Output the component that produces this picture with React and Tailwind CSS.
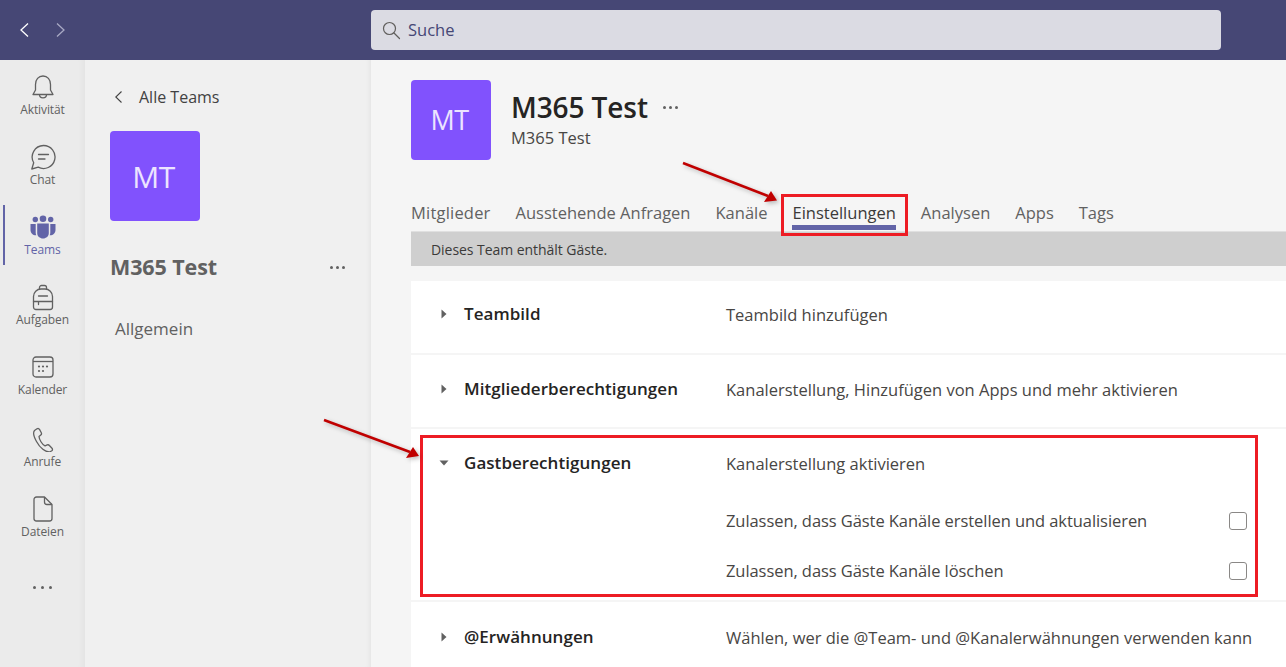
const font = { fontFamily: '"Open Sans", "Noto Sans", sans-serif' };

function Bell() {
  return (
    <svg width="24" height="26" viewBox="0 0 24 26" fill="none" stroke="#616161" strokeWidth="1.3" strokeLinejoin="round">
      <path d="M4.500 10.500C4.500 5.500 7.500 2 12 2s7.500 3.500 7.500 8.500v5.500l2.500 4.500H2L4.500 16z" />
      <path d="M8.500 20.500c0 2 1.500 3.300 3.500 3.300s3.500-1.300 3.500-3.300" />
    </svg>
  );
}

function ChatIcon() {
  return (
    <svg width="26" height="26" viewBox="0 0 26 26" fill="none" stroke="#616161" strokeWidth="1.3" strokeLinecap="round" strokeLinejoin="round">
      <path d="M13.500 1.500a11.500 11.500 0 1 1-5.300 21.700L1.800 25l1.900-6.300A11.500 11.500 0 0 1 13.500 1.500z" />
      <path d="M8.500 10.500h10M8.500 15h6.500" />
    </svg>
  );
}

function TeamsIcon() {
  return (
    <svg width="26" height="24" viewBox="0 0 26 24" fill="#6264a7">
      <circle cx="13" cy="3.800" r="3.300" />
      <circle cx="5.300" cy="4.500" r="2.700" />
      <circle cx="20.700" cy="4.500" r="2.700" />
      <path d="M0.500 9h5.200v8.500c0 1 .2 2 .6 2.800C3 20.500 0.500 18 0.500 15z" />
      <path d="M25.500 9h-5.200v8.500c0 1-.2 2-.6 2.800 3.300.2 5.800-2.300 5.800-5.300z" />
      <path d="M7.200 8.500h11.600v9.500c0 3.200-2.600 5.500-5.800 5.500s-5.800-2.300-5.800-5.500z" />
    </svg>
  );
}

function Backpack() {
  return (
    <svg width="22" height="27" viewBox="0 0 22 27" fill="none" stroke="#616161" strokeWidth="1.3" strokeLinecap="round" strokeLinejoin="round">
      <path d="M7.500 5V3.500A2 2 0 0 1 9.500 1.500h3a2 2 0 0 1 2 2V5" />
      <path d="M1.500 12.500A7.500 7.500 0 0 1 9 5h4a7.500 7.500 0 0 1 7.500 7.500V23a2.500 2.500 0 0 1-2.500 2.500H4A2.500 2.500 0 0 1 1.500 23z" />
      <path d="M1.500 17.500h19M6.500 12h9M6.500 17.500v3" />
    </svg>
  );
}

function CalendarIcon() {
  return (
    <svg width="22" height="22" viewBox="0 0 22 22" fill="none">
      <rect x="1" y="1" width="20" height="20" rx="3" stroke="#616161" strokeWidth="1.300" />
      <path d="M1 5.500h20" stroke="#616161" strokeWidth="1.300" />
      <g fill="#616161">
        <circle cx="7" cy="10.500" r="1.100" />
        <circle cx="11" cy="10.500" r="1.100" />
        <circle cx="15" cy="10.500" r="1.100" />
        <circle cx="7" cy="15" r="1.100" />
        <circle cx="11" cy="15" r="1.100" />
      </g>
    </svg>
  );
}

function Phone() {
  return (
    <svg width="22" height="25" viewBox="0 0 22 25" fill="none" stroke="#616161" strokeWidth="1.300" strokeLinejoin="round">
      <path d="M2.500 3.500 5 1.800c1-.6 2-.3 2.500.6l1.800 3.300c.4.800.2 1.700-.5 2.300L7 9.500c.2 2.800 3 8 6 9.300l2.200-.9c.8-.3 1.700 0 2.200.6l2.600 2.800c.7.800.6 1.900-.2 2.500l-1.800 1C13.500 25.500 8 21 4.500 14.500 2 10 .8 5.500 2.500 3.500z" />
    </svg>
  );
}

function FileIcon() {
  return (
    <svg width="20" height="26" viewBox="0 0 20 26" fill="none" stroke="#616161" strokeWidth="1.300" strokeLinejoin="round">
      <path d="M3.500 1h8L19 8.500v14A2.500 2.500 0 0 1 16.500 25h-13A2.500 2.500 0 0 1 1 22.500v-19A2.500 2.500 0 0 1 3.500 1z" />
      <path d="M11.500 1v5a2.500 2.500 0 0 0 2.500 2.500h5" />
    </svg>
  );
}

const navItems = [
  { label: "Aktivität", icon: <Bell />, height: "h-[70px]" },
  { label: "Chat", icon: <ChatIcon />, height: "h-[70px]" },
  { label: "Teams", icon: <TeamsIcon />, height: "h-[70px]", active: true },
  { label: "Aufgaben", icon: <Backpack />, height: "h-[70px]" },
  { label: "Kalender", icon: <CalendarIcon />, height: "h-[72px]" },
  { label: "Anrufe", icon: <Phone />, height: "h-[70px]" },
  { label: "Dateien", icon: <FileIcon />, height: "h-[70px]" },
];

function NavRail() {
  return (
    <nav className="w-[85px] shrink-0 bg-[#ebebeb] pt-[12px] flex flex-col items-center shadow-[inset_-8px_0_8px_-8px_rgba(0,0,0,0.06)]">
      {navItems.map((item) => (
        <div key={item.label} className={`relative w-full flex flex-col items-center ${item.height}`}>
          {item.active && <span className="absolute left-[3px] top-[-7px] w-[2px] h-[60px] bg-[#6264a7]" />}
          <div className="h-[30px] w-full flex items-center justify-center">{item.icon}</div>
          <span className={`text-[12px] leading-[16px] tracking-[-0.1px] ${item.active ? "text-[#6264a7]" : "text-[#616161]"}`}>
            {item.label}
          </span>
        </div>
      ))}
      <div className="mt-[22px] flex gap-[5px]">
        <span className="w-[3px] h-[3px] rounded-full bg-[#616161]" />
        <span className="w-[3px] h-[3px] rounded-full bg-[#616161]" />
        <span className="w-[3px] h-[3px] rounded-full bg-[#616161]" />
      </div>
    </nav>
  );
}

function Dots({ color = "#616161" }) {
  return (
    <span className="flex gap-[3px]">
      <span className="w-[3px] h-[3px] rounded-full" style={{ background: color }} />
      <span className="w-[3px] h-[3px] rounded-full" style={{ background: color }} />
      <span className="w-[3px] h-[3px] rounded-full" style={{ background: color }} />
    </span>
  );
}

function TeamPanel() {
  return (
    <aside className="w-[286px] shrink-0 bg-[#f0f0f0] pt-[26px] shadow-[inset_-6px_0_6px_-6px_rgba(0,0,0,0.08)]">
      <div className="flex items-center pl-[29px] h-[22px]">
        <svg width="9" height="14" viewBox="0 0 9 14" fill="none" stroke="#424242" strokeWidth="1.100">
          <path d="M7.500 1.500 1.800 7l5.700 5.500" />
        </svg>
        <span className="ml-[16px] text-[16px] text-[#424242]">Alle Teams</span>
      </div>
      <div className="ml-[25px] mt-[23px] w-[90px] h-[90px] rounded-[4px] bg-[#8152fd] flex items-center justify-center pr-[3px] text-[30px] text-[#ece4ff] tracking-[-0.5px]">
        MT
      </div>
      <div className="mt-[31px] pl-[25px] pr-[26px] flex items-center justify-between">
        <span className="text-[21.500px] font-bold tracking-[-0.1px] text-[#616161] leading-[30px]">M365 Test</span>
        <Dots />
      </div>
      <div className="mt-[36px] pl-[30px] text-[17px] text-[#616161] leading-[22px]">Allgemein</div>
    </aside>
  );
}

const tabs = ["Mitglieder", "Ausstehende Anfragen", "Kanäle", "Einstellungen", "Analysen", "Apps", "Tags"];

function Tabs() {
  return (
    <div className="flex gap-[25px] h-[35px] mt-[37px] border-b border-[#e0e0e0]">
      {tabs.map((tab) => (
        <div key={tab} className={`relative text-[16.500px] leading-[32px] text-[#616161] ${tab === "Mitglieder" ? "tracking-[0.2px]" : ""}`}>
          <span className={tab === "Einstellungen" ? "text-[#3b3a39]" : ""}>{tab}</span>
          {tab === "Einstellungen" && <span className="absolute left-0 right-0 bottom-[1px] h-[5px] bg-[#6264a7]" />}
        </div>
      ))}
    </div>
  );
}

function Caret({ open }) {
  return (
    <svg width="10" height="10" viewBox="0 0 10 10" fill="#616161" className="shrink-0">
      {open ? <path d="M.5 2.500h9L5 7.500z" /> : <path d="M2.500 .5v9l5-4.500z" />}
    </svg>
  );
}

function Row({ title, text, open, className, children }) {
  return (
    <section className={`bg-white ${className}`}>
      <div className="flex items-center pl-[28px]">
        <Caret open={open} />
        <h3 className="w-[262px] ml-[15px] text-[17px] font-semibold tracking-[0.05px] text-[#252423] leading-[22px]">{title}</h3>
        <p className="text-[16.500px] text-[#484644] leading-[22px] mt-[2px] whitespace-nowrap">{text}</p>
      </div>
      {children}
    </section>
  );
}

function Option({ label, className }) {
  return (
    <div className={`flex items-center pl-[315px] pr-[39px] justify-between ${className}`}>
      <span className="text-[16.500px] tracking-[-0.07px] text-[#484644] leading-[22px]">{label}</span>
      <span className="w-[18px] h-[18px] rounded-[3px] border-[1.5px] border-[#8a8886] bg-white" />
    </div>
  );
}

function Annotations() {
  return (
    <>
      <div className="absolute left-[781px] top-[194px] w-[127px] h-[42px] border-[3px] border-[#ed1c24]" />
      <div className="absolute left-[420px] top-[435px] w-[838px] h-[162px] border-[3px] border-[#ed1c24]" />
      <svg className="absolute left-0 top-0 pointer-events-none drop-shadow-[2px_2px_2px_rgba(0,0,0,0.25)]" width="1286" height="667" viewBox="0 0 1286 667" fill="#c00000">
        <path d="M683 163 768 196" stroke="#c00000" strokeWidth="2.500" />
        <path d="M777 200.500 771 191 764 202z" />
        <path d="M324 420 410 452" stroke="#c00000" strokeWidth="2.500" />
        <path d="M419 456 413 447 406 458z" />
      </svg>
    </>
  );
}

export default function App() {
  return (
    <div className="relative w-[1286px] h-[667px] overflow-hidden flex flex-col" style={font}>
      <header className="h-[60px] shrink-0 bg-[#464775] flex items-center relative">
        <svg className="ml-[19px]" width="11" height="16" viewBox="0 0 11 16" fill="none" stroke="#ffffff" strokeWidth="1.300">
          <path d="M9 1.500 2 8l7 6.500" />
        </svg>
        <svg className="ml-[25px]" width="11" height="16" viewBox="0 0 11 16" fill="none" stroke="#a8a9c4" strokeWidth="1.300">
          <path d="M2 1.500 9 8l-7 6.500" />
        </svg>
        <div className="ml-[305px] w-[850px] h-[40px] rounded-[4px] bg-[#dbdbe3] flex items-center pl-[11px]">
          <svg width="19" height="19" viewBox="0 0 19 19" fill="none" stroke="#605e5c" strokeWidth="1.200" strokeLinecap="round">
            <circle cx="7.500" cy="7.500" r="6" />
            <path d="M12 12l5.500 5.500" />
          </svg>
          <span className="ml-[7px] text-[16.500px] text-[#464775]">Suche</span>
        </div>
      </header>
      <div className="flex flex-1 min-h-0">
        <NavRail />
        <TeamPanel />
        <main className="flex-1 min-w-0 bg-[#f5f5f5] pl-[40px] pt-[20px]">
          <div className="flex items-start">
            <div className="w-[80px] h-[80px] rounded-[4px] bg-[#8152fd] flex items-center justify-center pr-[3px] text-[27px] text-[#ece4ff] tracking-[-0.5px]">
              MT
            </div>
            <div className="ml-[20px] pt-[9px]">
              <div className="flex items-center gap-[15px]">
                <span className="text-[28px] font-semibold tracking-[-0.1px] text-[#252423] leading-[36px]">M365 Test</span>
                <Dots />
              </div>
              <div className="text-[16.500px] text-[#484644] leading-[22px] mt-[2px]">M365 Test</div>
            </div>
          </div>
          <Tabs />
          <div className="h-[34px] bg-[#cfcfcf] pl-[20px] flex items-center text-[14px] tracking-[-0.05px] text-[#3b3a39]">
            Dieses Team enthält Gäste.
          </div>
          <div className="mt-[15px] flex flex-col gap-[2px]">
            <Row title="Teambild" text="Teambild hinzufügen" className="h-[72px] pt-[21px]" />
            <Row title="Mitgliederberechtigungen" text="Kanalerstellung, Hinzufügen von Apps und mehr aktivieren" className="h-[72px] pt-[22px]" />
            <Row title="Gastberechtigungen" text="Kanalerstellung aktivieren" open className="h-[171px] pt-[22px]">
              <Option label="Zulassen, dass Gäste Kanäle erstellen und aktualisieren" className="mt-[35px]" />
              <Option label="Zulassen, dass Gäste Kanäle löschen" className="mt-[28px]" />
            </Row>
            <Row title="@Erwähnungen" text="Wählen, wer die @Team- und @Kanalerwähnungen verwenden kann" className="h-[80px] pt-[23px]" />
          </div>
        </main>
      </div>
      <Annotations />
    </div>
  );
}
